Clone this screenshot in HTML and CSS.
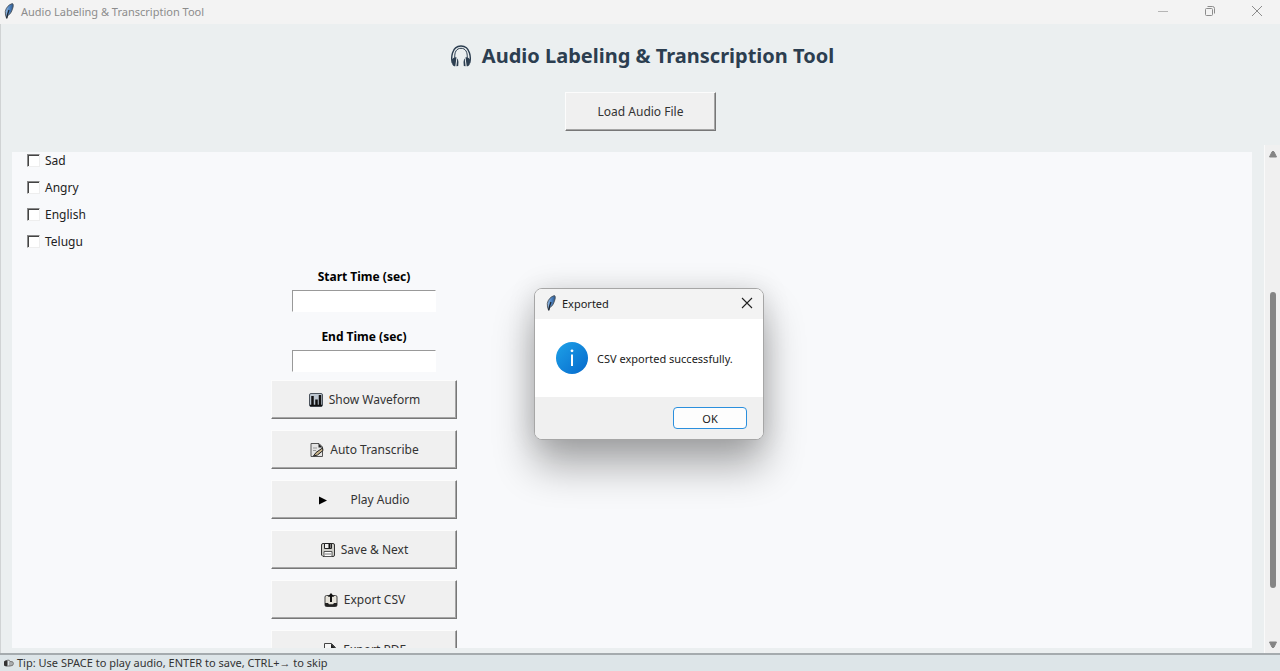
FILE: index.html
```html
<!DOCTYPE html>
<html lang="en">
<head>
<meta charset="utf-8">
<title>Audio Labeling &amp; Transcription Tool</title>
<link rel="stylesheet" href="styles.css">
</head>
<body>
<svg width="0" height="0" class="defs" aria-hidden="true">
  <defs>
    <linearGradient id="quill" x1="0" y1="0" x2="1" y2="0">
      <stop offset="0" stop-color="#9dbfe3"/><stop offset=".5" stop-color="#4f86c6"/><stop offset="1" stop-color="#2d5688"/>
    </linearGradient>
    <linearGradient id="info" x1="0" y1="0" x2="1" y2="1">
      <stop offset="0" stop-color="#1ea2e8"/><stop offset="1" stop-color="#0669cc"/>
    </linearGradient>
    <symbol id="feather" viewBox="0 0 10 16">
      <path d="M8.300.6C5 1.500 2 4.500 1.300 8.500L1.500 12l1.200 3.500.9-2.800C6.500 11.500 8.300 7.500 9.200 3.500 9.400 2 9.200.7 8.300.6z" fill="url(#quill)" stroke="#4b5158" stroke-width=".9"/>
      <path d="M5 7C4 9.500 3.300 12 2.700 15" fill="none" stroke="#1d2733" stroke-width="1.300"/>
    </symbol>
  </defs>
</svg>
<header class="titlebar">
  <svg class="feather"><use href="#feather"/></svg>
  <span class="titlebar-text">Audio Labeling &amp; Transcription Tool</span>
  <div class="window-controls">
    <button class="win-btn" aria-label="Minimize"><svg width="12" height="12" viewBox="0 0 12 12"><path d="M1 6.500h10" stroke="#b5b5b5"/></svg></button>
    <button class="win-btn" aria-label="Restore"><svg width="12" height="12" viewBox="0 0 12 12" fill="none" stroke="#8c8c8c"><rect x="1.500" y="3.500" width="7" height="7" rx="1"/><path d="M3.500 1.500h5q2 0 2 2v5"/></svg></button>
    <button class="win-btn" aria-label="Close"><svg width="12" height="12" viewBox="0 0 12 12"><path d="M1 1l10 10M11 1L1 11" stroke="#8c8c8c"/></svg></button>
  </div>
</header>
<main class="app">
  <div class="hero">
    <h1 class="title">
      <svg class="headphones" width="20" height="24" viewBox="0 0 20 24">
        <path d="M1.300 19C.5 16 .6 12 1.500 9 2.800 4.300 5.800 2 10 2s7.200 2.300 8.500 7c.9 3 1 7 .2 10" fill="none" stroke="#2c3e50" stroke-width="1.400"/>
        <path d="M3.800 14C3.300 8 5.500 4.300 10 4.300S16.700 8 16.200 14" fill="none" stroke="#2c3e50" stroke-width="1"/>
        <path d="M1 15.500c1.200-1.800 3-2.500 4.500-2.200L4.300 22.300C2.800 22.300 1.700 21.500 1.200 20zM19 15.500c-1.200-1.800-3-2.500-4.500-2.200l1.200 9c1.500 0 2.600-.8 3.100-2.300z" fill="#2c3e50"/>
        <path d="M6.800 14.500q1.200 3.500.4 7.500l-1.800.3.800-7zM13.200 14.500q-1.200 3.500-.4 7.500l1.800.3-.8-7z" fill="#2c3e50"/>
      </svg>
      <span>Audio Labeling &amp; Transcription Tool</span>
    </h1>
    <button class="btn btn-load">Load Audio File</button>
  </div>
  <div class="workspace">
    <section class="pane">
      <div class="form">
        <div class="checks">
          <label class="check"><input type="checkbox"><span>Sad</span></label>
          <label class="check"><input type="checkbox"><span>Angry</span></label>
          <label class="check"><input type="checkbox"><span>English</span></label>
          <label class="check"><input type="checkbox"><span>Telugu</span></label>
        </div>
        <div class="field"><label for="start">Start Time (sec)</label><input id="start" type="text"></div>
        <div class="field"><label for="end">End Time (sec)</label><input id="end" type="text"></div>
        <div class="actions">
          <button class="btn"><svg width="16" height="16" viewBox="0 0 16 16"><rect x="1.500" y="1.500" width="13" height="13" rx="1.500" fill="#bcc6d0" stroke="#4c545d"/><path d="M4.500 4v10M8.500 7.500V14M12 3v11" stroke="#111" stroke-width="2.500"/><path d="M2 13.500h12" stroke="#111" stroke-width="1.500"/></svg><span>Show Waveform</span></button>
          <button class="btn"><svg width="16" height="16" viewBox="0 0 16 16"><path d="M2 1.500h8l3.500 3.500v9.500H2z" fill="#e4e4e4" stroke="#555"/><path d="M9.500 1.500l4 4h-4z" fill="#222"/><path d="M4 6h4M4 8.500h3" stroke="#999"/><path d="M13.500 6l-6.500 4.500-2.500 3.500 4-1 5.500-4.500z" fill="#c9b58c" stroke="#222"/></svg><span>Auto Transcribe</span></button>
          <button class="btn btn-play"><svg width="10" height="16" viewBox="0 0 10 16"><path d="M1 4.500l8 4-8 4z" fill="#000"/></svg><span>Play Audio</span></button>
          <button class="btn"><svg width="16" height="16" viewBox="0 0 16 16"><path d="M1.500 3q0-1.500 1.500-1.500h10q1.500 0 1.500 1.500v10q0 1.500-1.500 1.500H3L1.500 13z" fill="#cfcfca" stroke="#333"/><path d="M4.500 1.500h7v5h-7z" fill="#eee" stroke="#222"/><path d="M9.500 2v4" stroke="#111" stroke-width="2"/><path d="M4 9.500h8v5H4z" fill="#fff" stroke="#555"/><path d="M5 12h6" stroke="#777"/></svg><span>Save &amp; Next</span></button>
          <button class="btn"><svg width="16" height="16" viewBox="0 0 16 16"><rect x="2" y="3.500" width="12" height="11" rx="1.500" fill="#e6e3da" stroke="#444"/><path d="M2 11h3l1 1.200h4l1-1.200h3v2q0 1.500-1.500 1.500h-9Q2 14.500 2 13z" fill="#222"/><path d="M8 10V3" stroke="#111" stroke-width="2"/><path d="M4.800 4.800L8 1l3.200 3.800z" fill="#111"/></svg><span>Export CSV</span></button>
          <button class="btn"><svg width="16" height="16" viewBox="0 0 16 16"><path d="M2.500 1.500h7l4 4v9h-11z" fill="#f6f6f6" stroke="#444"/><path d="M9 1.500l4.500 4.500H9z" fill="#222"/></svg><span>Export PDF</span></button>
        </div>
      </div>
    </section>
    <div class="scrollbar" aria-hidden="true">
      <svg width="10" height="8" viewBox="0 0 10 8"><path d="M1.500 7h7L6 1.800q-1-1-2 0z" fill="#858585" stroke="#858585"/></svg>
      <div class="track"><div class="thumb"></div></div>
      <svg width="10" height="8" viewBox="0 0 10 8"><path d="M1.500 1h7L6 6.200q-1 1-2 0z" fill="#858585" stroke="#858585"/></svg>
    </div>
  </div>
</main>
<footer class="status">
  <svg width="12" height="10" viewBox="0 0 12 10"><path d="M1 3.500Q2 2 4.500 2v6.500Q2 8.500 1 7.500z" fill="#333"/><path d="M4.500 2q2.500 0 2.500 1.500V8H4.500M7 3.500q3.500-.5 3.500 2T7 8M9 4v3.500" fill="none" stroke="#777"/></svg>
  <span>Tip: Use SPACE to play audio, ENTER to save, CTRL+→ to skip</span>
</footer>
<div class="dialog" role="dialog" aria-labelledby="dlg-title">
  <div class="dialog-head">
    <svg class="feather"><use href="#feather"/></svg>
    <span id="dlg-title">Exported</span>
    <button class="dialog-close" aria-label="Close"><svg width="12" height="12" viewBox="0 0 12 12"><path d="M1 1l10 10M11 1L1 11" stroke="#222" stroke-width="1.100"/></svg></button>
  </div>
  <div class="dialog-body">
    <svg width="34" height="34" viewBox="0 0 34 34"><circle cx="17" cy="17" r="16" fill="url(#info)"/><path d="M17 13.500V25" stroke="#fff" stroke-width="2"/><circle cx="17" cy="9.800" r="1.400" fill="#fff"/></svg>
    <span>CSV exported successfully.</span>
  </div>
  <div class="dialog-foot"><button class="ok">OK</button></div>
</div>
</body>
</html>
```
FILE: styles.css
```css
* { box-sizing: border-box; }
body {
  margin: 0;
  height: 100vh;
  display: flex;
  flex-direction: column;
  overflow: hidden;
  background: #ebeff0;
  color: #222;
  font-family: "Noto Sans", "Open Sans", sans-serif;
  font-size: 12px;
}
button, input { font: inherit; color: inherit; }
svg { flex: none; display: block; }
.defs { position: absolute; }
.feather { width: 10px; height: 16px; }

.titlebar {
  display: flex;
  align-items: center;
  height: 24px;
  padding: 0 0 2px 4px;
  gap: 7px;
  background: #f3f3f3;
  color: #8c8c8c;
  font-size: 11px;
}
.window-controls { display: flex; margin-left: auto; }
.win-btn {
  display: flex;
  align-items: center;
  justify-content: center;
  width: 47px;
  height: 22px;
  padding: 0;
  border: 0;
  background: none;
}

.app {
  flex: 1;
  min-height: 0;
  display: flex;
  flex-direction: column;
  border-left: 1px solid #d0d3d4;
}
.hero {
  display: flex;
  flex-direction: column;
  align-items: center;
  gap: 20px;
  padding-top: 16px;
  height: 121px;
}
.title {
  display: flex;
  align-items: center;
  gap: 11px;
  margin: 0;
  padding-left: 4px;
  color: #2c3e50;
  font-size: 20px;
  line-height: 32px;
}
.btn {
  display: flex;
  align-items: center;
  justify-content: center;
  gap: 5px;
  width: 186px;
  height: 39px;
  padding: 0;
  border: 1px solid;
  border-color: #fcfcfc #777 #777 #fcfcfc;
  box-shadow: inset -1px -1px 0 #a6a6a6;
  background: #f0f0f0;
  color: #333;
  font-size: 12px;
}
.btn-load { width: 151px; }
.btn-play { gap: 22px; }

.workspace { flex: 1; min-height: 0; display: flex; }
.pane {
  flex: 1;
  margin: 7px 12px 5px 11px;
  overflow: hidden;
  background: #f8f9fb;
}
.form {
  display: flex;
  flex-direction: column;
  align-items: center;
  max-width: 704px;
}
.checks { align-self: stretch; padding-left: 15px; margin-bottom: 12px; }
.check { display: flex; align-items: center; gap: 5px; height: 27px; }
.checks .check:first-child { height: 22px; padding-bottom: 5px; }
.check input {
  appearance: none;
  width: 13px;
  height: 13px;
  margin: 0;
  border: 1px solid;
  border-color: #8a8a8a #eee #eee #8a8a8a;
  box-shadow: inset 1px 1px 0 #444;
  background: #fff;
}
.field { display: flex; flex-direction: column; align-items: center; height: 60px; }
.field label { height: 23px; line-height: 20px; font-weight: bold; color: #000; }
.field input {
  width: 144px;
  height: 22px;
  border: 1px solid;
  border-color: #999 #fff #fff #999;
  background: #fff;
}
.actions { display: flex; flex-direction: column; gap: 11px; margin-top: -7px; }

.scrollbar {
  display: flex;
  flex-direction: column;
  align-items: center;
  gap: 3px;
  width: 16px;
  padding: 5px 0 4px;
  border-left: 1px solid #fafafa;
  background: #f0f0f0;
}
.track { flex: 1; width: 6px; }
.thumb { height: 62%; margin-top: 131px; border-radius: 3px; background: #858585; }

.status {
  display: flex;
  align-items: center;
  gap: 2px;
  height: 18px;
  padding-left: 3px;
  border-top: 2px solid #a5abae;
  background: #dde5e8;
  color: #333;
  font-size: 11px;
  line-height: 16px;
}

.dialog {
  position: absolute;
  left: 50%;
  top: 288px;
  width: 230px;
  margin-left: -106px;
  overflow: hidden;
  border: 1px solid #a6a6a6;
  border-radius: 8px;
  background: #fff;
  box-shadow: 0 26px 40px rgba(0, 0, 0, .32), 0 0 28px rgba(0, 0, 0, .12);
  color: #1a1a1a;
  font-size: 11px;
}
.dialog-head {
  display: flex;
  align-items: center;
  gap: 6px;
  height: 30px;
  padding: 0 10px 2px 11px;
  background: #f3f3f3;
}
.dialog-close { margin-left: auto; padding: 0; border: 0; background: none; }
.dialog-body { display: flex; align-items: center; gap: 8px; height: 78px; padding-left: 20px; white-space: nowrap; }
.dialog-foot { display: flex; justify-content: flex-end; height: 42px; padding: 10px 16px; background: #f0f0f0; }
.ok {
  width: 74px;
  height: 22px;
  padding: 0;
  border: 1px solid #2b8fdd;
  border-radius: 4px;
  background: #fdfdfd;
}
```
